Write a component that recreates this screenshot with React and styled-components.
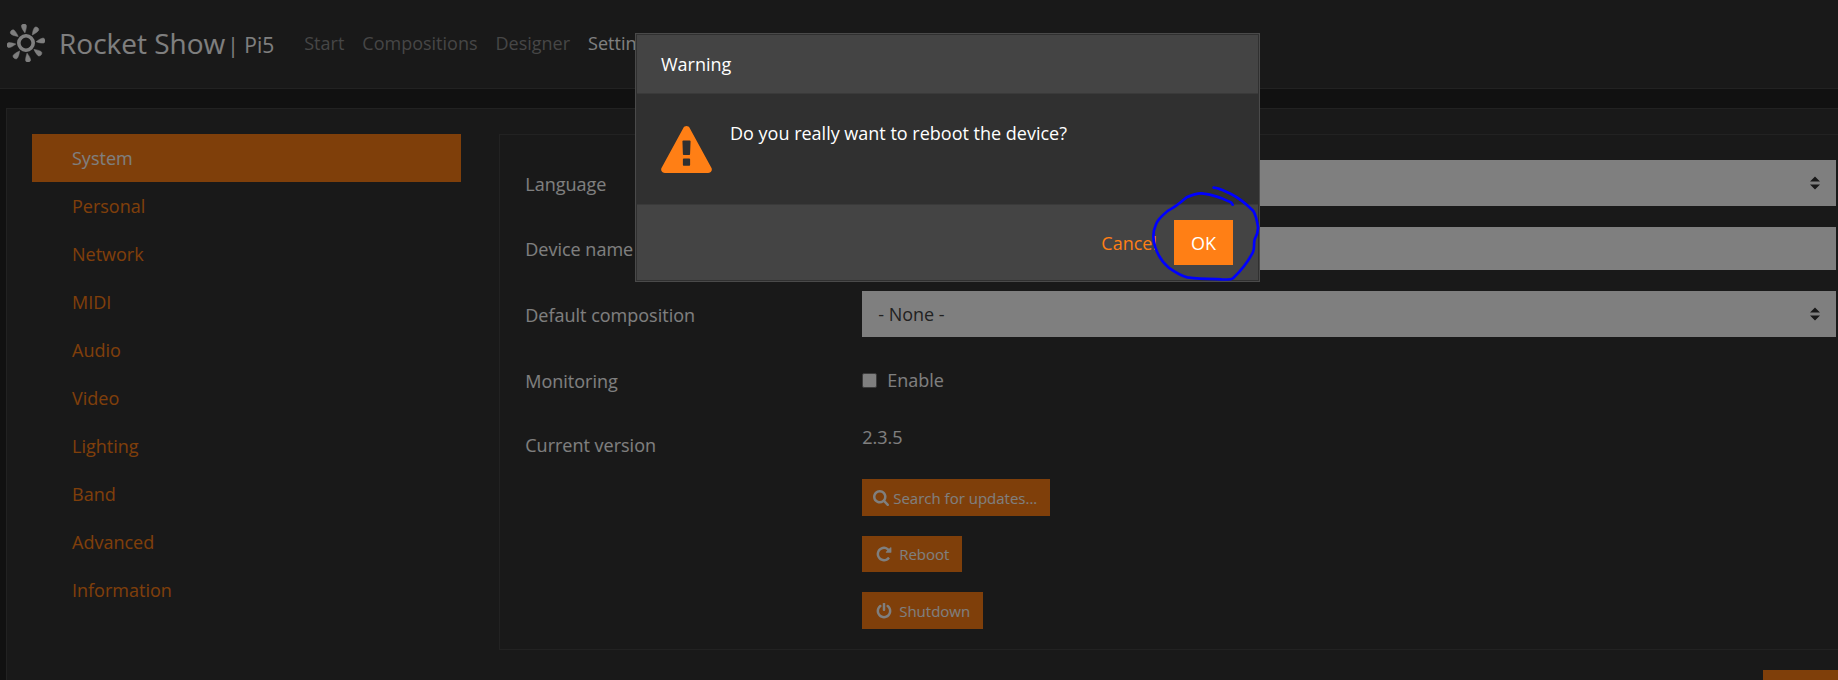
import React from "react";
import styled, { createGlobalStyle, ThemeProvider } from "styled-components";

const theme = {
  accent: "#ff7f15",
  text: "#ffffff",
  muted: "#8c8c8c",
  page: "#222222",
  panel: "#323232",
  line: "#444444",
};

const GlobalStyle = createGlobalStyle`
  *, *::before, *::after { box-sizing: border-box; }
  html, body, #root { height: 100%; }
  body {
    margin: 0;
    overflow: hidden;
    background: #222222;
    color: #ffffff;
    font: 18px/28px "Open Sans", "Noto Sans", sans-serif;
  }
  button, input, select { font: inherit; }
`;

const Shell = styled.div`
  height: 100%;
  overflow: hidden;
`;

const Page = styled.div`
  width: calc(100% + 57px);
`;

const TopBar = styled.header`
  display: flex;
  align-items: center;
  height: 89px;
  padding: 0 7px 3px;
  background: ${(p) => p.theme.panel};
  border-bottom: 1px solid ${(p) => p.theme.line};
`;

const Brand = styled.a`
  display: flex;
  align-items: center;
  color: ${(p) => p.theme.text};
  text-decoration: none;
  white-space: pre;
`;

const BrandName = styled.span`
  margin-left: 14px;
  font-size: 28px;
`;

const BrandDevice = styled.span`
  margin: 4px 0 0 2px;
  font-size: 21px;
`;

const MainNav = styled.nav`
  display: flex;
  gap: 18px;
  margin-left: 30px;
`;

const MainLink = styled.a`
  color: ${(p) => (p.$active ? p.theme.text : p.theme.muted)};
  text-decoration: none;
`;

const Panel = styled.main`
  margin: 19px 6px 0;
  padding: 25px;
  background: ${(p) => p.theme.panel};
  border: 1px solid ${(p) => p.theme.line};
`;

const Columns = styled.div`
  display: grid;
  grid-template-columns: repeat(12, minmax(0, 1fr));
  column-gap: 38px;
`;

const SideNav = styled.nav`
  grid-column: span 3;
`;

const SideLink = styled.a`
  display: block;
  padding: 10px 40px;
  color: ${(p) => (p.$active ? p.theme.text : p.theme.accent)};
  background: ${(p) => (p.$active ? p.theme.accent : "transparent")};
  text-decoration: none;
`;

const Content = styled.form`
  grid-column: span 9;
`;

const Card = styled.div`
  display: grid;
  row-gap: 21px;
  padding: 25px 26px 20px 25px;
  border: 1px solid ${(p) => p.theme.line};
`;

const Row = styled(Columns)`
  align-items: ${(p) => (p.$top ? "start" : "center")};
  column-gap: 37px;
`;

const Label = styled.label`
  grid-column: span 3;
  padding: 8px 0 7px;
`;

const Field = styled.div`
  grid-column: span 9;
`;

const SelectWrap = styled.div`
  display: flex;
  align-items: center;
  position: relative;
`;

const Select = styled.select`
  appearance: none;
  width: 100%;
  height: 46px;
  padding: 0 16px;
  border: 0;
  border-radius: 0;
  background: #ffffff;
  color: #444444;
`;

const SelectArrows = styled.svg`
  position: absolute;
  right: 16px;
  width: 10px;
  height: 14px;
  fill: #323232;
  pointer-events: none;
`;

const TextInput = styled.input`
  display: block;
  width: 100%;
  height: 43px;
  padding: 0 16px;
  border: 0;
  background: #ffffff;
  color: #444444;
`;

const CheckLabel = styled.label`
  display: flex;
  align-items: center;
  gap: 10px;
  min-height: 44px;
`;

const CheckBox = styled.input`
  appearance: none;
  width: 15px;
  height: 15px;
  margin: 0;
  border: 1px solid #767676;
  border-radius: 2px;
  background: #ffffff;
`;

const Version = styled.div`
  margin-bottom: 28px;
`;

const Actions = styled.div`
  display: flex;
  flex-direction: column;
  align-items: flex-start;
  gap: 20px;
`;

const SmallButton = styled.button`
  display: flex;
  align-items: center;
  gap: ${(p) => (p.$wide ? "7px" : "4px")};
  height: ${(p) => (p.$tall ? "37px" : "36px")};
  padding: ${(p) => (p.$wide ? "0 13px 0 14px" : "0 13px 0 11px")};
  border: 0;
  background: ${(p) => p.theme.accent};
  color: ${(p) => p.theme.text};
  font-size: 15px;
`;

const Footer = styled.div`
  display: flex;
  justify-content: flex-end;
  margin-top: 20px;
`;

const Button = styled.button`
  height: 45px;
  padding: 0 17px;
  border: 0;
  background: ${(p) => (p.$plain ? "transparent" : p.theme.accent)};
  color: ${(p) => (p.$plain ? p.theme.accent : p.theme.text)};
`;

const SaveButton = styled(Button)`
  width: 100px;
`;

const Icon = styled.svg`
  flex: none;
  width: ${(p) => p.$size}px;
  height: ${(p) => p.$size}px;
  fill: currentColor;
`;

const Backdrop = styled.div`
  position: fixed;
  inset: 0;
  display: flex;
  justify-content: center;
  align-items: flex-start;
  padding: 33px 0 0 57px;
  background: rgba(0, 0, 0, 0.5);
`;

const Dialog = styled.div`
  position: relative;
  width: 625px;
  padding: 1px;
  border: 1px solid #4a4a4a;
  background: #303030;
`;

const DialogHeader = styled.h1`
  margin: 0;
  padding: 15px 24px;
  background: #444444;
  font-size: 18px;
  font-weight: 400;
  line-height: 28px;
`;

const DialogBody = styled.div`
  display: flex;
  align-items: flex-start;
  gap: 18px;
  min-height: 112px;
  padding: 25px 24px;
  border-top: 1px solid #3a3a3a;
  border-bottom: 1px solid #3a3a3a;
`;

const WarningIcon = styled.svg`
  width: 51px;
  height: 47px;
  margin-top: 7px;
  fill: ${(p) => p.theme.accent};
`;

const DialogFooter = styled.div`
  display: flex;
  justify-content: flex-end;
  align-items: center;
  padding: 15px 25px;
  background: #444444;
`;

const PenMark = styled.svg`
  position: absolute;
  right: -3px;
  bottom: -1px;
  width: 112px;
  height: 97px;
  fill: none;
  stroke: #0000ff;
  pointer-events: none;
`;

const petal = "M-2.800 -17C-3 -20 2.400 -20 2.200 -17C2 -14.500 .8 -12 0 -10.200C-1 -12 -2.600 -14.500 -2.800 -17Z";

function SunLogo() {
  return (
    <Icon $size={38} viewBox="-19 -19 38 38" aria-hidden="true">
      <circle cx="0" cy="0" r="7.200" fill="none" stroke="currentColor" strokeWidth="3.600" />
      {[-6, 38, 83, 129, 174, 219, 264, 310].map((a) => (
        <path
          key={a}
          d={petal}
          stroke="currentColor"
          strokeWidth="0.500"
          strokeLinejoin="round"
          transform={`rotate(${a})`}
        />
      ))}
    </Icon>
  );
}

const icons = {
  search:
    "M1152 832q0-185-131.500-316.500t-316.500-131.500-316.500 131.500-131.500 316.500 131.500 316.500 316.500 131.500 316.500-131.500 131.500-316.500zm512 832q0 52-38 90t-90 38q-54 0-90-38l-343-342q-179 124-399 124-143 0-273.500-55.500t-225-150-150-225-55.500-273.500 55.500-273.500 150-225 225-150 273.500-55.500 273.500 55.500 225 150 150 225 55.500 273.500q0 220-124 399l343 343q37 37 37 90z",
  repeat:
    "M1536 256v448q0 26-19 45t-45 19h-448q-42 0-59-40-17-39 14-69l138-138q-148-137-349-137-104 0-198.500 40.500t-163.500 109.500-109.500 163.500-40.500 198.500 40.500 198.500 109.500 163.500 163.500 109.500 198.500 40.500q119 0 225-52t179-147q7-10 23-12 15 0 25 9l137 138q9 8 9.500 20.500t-7.500 22.500q-109 132-264 204.500t-327 72.500q-156 0-298-61t-245-164-164-245-61-298 61-298 164-245 245-164 298-61q147 0 284.500 55.500t244.500 156.500l130-129q29-31 70-14 39 17 39 59z",
  power:
    "M1536 896q0 156-61 298t-164 245-245 164-298 61-298-61-245-164-164-245-61-298q0-182 80.500-343t226.500-270q43-32 95.500-25t83.500 50q32 42 24.500 94.500t-49.500 84.500q-98 74-151.500 181t-53.500 228q0 104 40.500 198.500t109.500 163.500 163.500 109.500 198.500 40.500 198.500-40.500 163.500-109.500 109.500-163.500 40.500-198.500q0-121-53.500-228t-151.500-181q-42-32-49.500-84.500t24.500-94.500q31-43 84-50t95 25q146 109 226.500 270t80.500 343zm-640-768v640q0 52-38 90t-90 38-90-38-38-90v-640q0-52 38-90t90-38 90 38 38 90z",
};

function Glyph({ name }) {
  const box = name === "search" ? "0 128 1664 1664" : "-64 64 1664 1664";
  return (
    <Icon $size={16} viewBox={box} aria-hidden="true">
      <path d={icons[name]} />
    </Icon>
  );
}

function SelectField({ id, options }) {
  return (
    <SelectWrap>
      <Select id={id}>
        {options.map((o) => (
          <option key={o}>{o}</option>
        ))}
      </Select>
      <SelectArrows viewBox="0 0 10 14" aria-hidden="true">
        <path d="M5 0.500L10 5.500H0ZM5 13.500L10 8.500H0Z" />
      </SelectArrows>
    </SelectWrap>
  );
}

const mainLinks = ["Start", "Compositions", "Designer", "Settings"];
const sections = [
  "System",
  "Personal",
  "Network",
  "MIDI",
  "Audio",
  "Video",
  "Lighting",
  "Band",
  "Advanced",
  "Information",
];

export default function App() {
  return (
    <ThemeProvider theme={theme}>
      <GlobalStyle />
      <Shell>
        <Page>
          <TopBar>
            <Brand href="#">
              <SunLogo />
              <BrandName>Rocket Show</BrandName>
              <BrandDevice>| Pi5</BrandDevice>
            </Brand>
            <MainNav>
              {mainLinks.map((name) => (
                <MainLink key={name} href="#" $active={name === "Settings"}>
                  {name}
                </MainLink>
              ))}
            </MainNav>
          </TopBar>
          <Panel>
            <Columns>
              <SideNav>
                {sections.map((name) => (
                  <SideLink key={name} href="#" $active={name === "System"}>
                    {name}
                  </SideLink>
                ))}
              </SideNav>
              <Content>
                <Card>
                  <Row>
                    <Label htmlFor="language">Language</Label>
                    <Field>
                      <SelectField id="language" options={[""]} />
                    </Field>
                  </Row>
                  <Row>
                    <Label htmlFor="device">Device name</Label>
                    <Field>
                      <TextInput id="device" type="text" />
                    </Field>
                  </Row>
                  <Row>
                    <Label htmlFor="composition">Default composition</Label>
                    <Field>
                      <SelectField id="composition" options={["- None -"]} />
                    </Field>
                  </Row>
                  <Row>
                    <Label as="span">Monitoring</Label>
                    <Field>
                      <CheckLabel>
                        <CheckBox type="checkbox" />
                        Enable
                      </CheckLabel>
                    </Field>
                  </Row>
                  <Row $top>
                    <Label as="span">Current version</Label>
                    <Field>
                      <Version>2.3.5</Version>
                      <Actions>
                        <SmallButton type="button" $tall>
                          <Glyph name="search" />
                          Search for updates...
                        </SmallButton>
                        <SmallButton type="button" $wide>
                          <Glyph name="repeat" />
                          Reboot
                        </SmallButton>
                        <SmallButton type="button" $wide $tall>
                          <Glyph name="power" />
                          Shutdown
                        </SmallButton>
                      </Actions>
                    </Field>
                  </Row>
                </Card>
                <Footer>
                  <SaveButton type="button" aria-label="Save" />
                </Footer>
              </Content>
            </Columns>
          </Panel>
        </Page>
      </Shell>
      <Backdrop>
        <Dialog role="dialog" aria-modal="true" aria-labelledby="dialog-title">
          <DialogHeader id="dialog-title">Warning</DialogHeader>
          <DialogBody>
            <WarningIcon viewBox="0 0 1792 1664" aria-hidden="true">
              <path d="M1024 1375v-190q0-14-9.500-23.500t-22.500-9.500h-192q-13 0-22.500 9.500t-9.500 23.500v190q0 14 9.500 23.500t22.500 9.500h192q13 0 22.500-9.500t9.500-23.500zm-2-374l18-459q0-12-10-19-13-11-24-11h-220q-11 0-24 11-10 7-10 21l17 457q0 10 10 16.500t24 6.500h185q14 0 23.500-6.500t10.500-16.500zm-14-934l768 1408q35 63-2 126-17 29-46.500 46t-63.500 17h-1536q-34 0-63.500-17t-46.500-46q-37-63-2-126l768-1408q17-31 47-49t65-18 65 18 47 49z" />
            </WarningIcon>
            <div>Do you really want to reboot the device?</div>
          </DialogBody>
          <DialogFooter>
            <Button type="button" $plain>
              Cancel
            </Button>
            <Button type="button">OK</Button>
          </DialogFooter>
          <PenMark viewBox="270 75 336 291" aria-hidden="true">
            <path
              d="M461 83C478 84 495 94 513 102C535 113 560 133 580 153C588 166 591 182 594 200C595 215 592 224 584 238C580 250 585 262 579 276C566 302 545 330 519 355C510 361 500 358 485 358C450 357 420 357 382 352C362 347 343 335 325 322C305 305 292 280 286 262C279 242 278 215 288 193C296 173 309 165 326 151C345 142 365 125 380 112C398 104 417 98 431 101C455 104 485 114 506 124C513 126 516 129 518 134"
              strokeWidth="8"
              strokeLinecap="round"
              strokeLinejoin="round"
            />
          </PenMark>
        </Dialog>
      </Backdrop>
    </ThemeProvider>
  );
}
